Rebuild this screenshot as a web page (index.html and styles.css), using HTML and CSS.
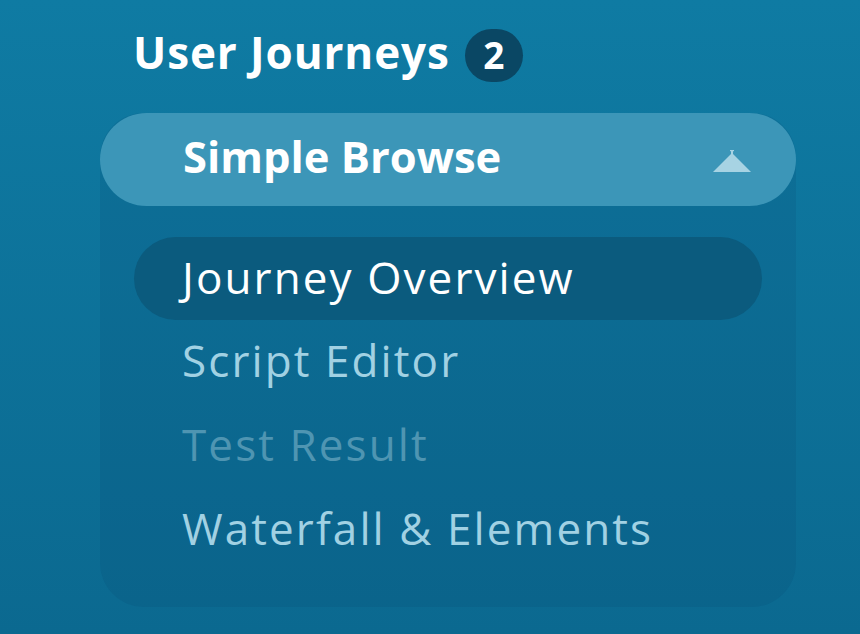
FILE: index.html
```html
<!DOCTYPE html>
<html>
<head>
<meta charset="utf-8">
<link rel="stylesheet" href="styles.css">
</head>
<body>
<div class="page">
  <h1 class="title"><span class="title-text">User Journeys</span><span class="badge">2</span></h1>
  <div class="panel">
    <div class="panel-head">
      <span class="head-text">Simple Browse</span>
      <svg class="caret" width="40" height="24" viewBox="0 0 40 24">
        <polygon points="1,23 39,23 20,4" fill="#a7d3e3"/>
        <rect x="19" y="1" width="2" height="4" fill="#a7d3e3"/>
        <rect x="18" y="1" width="4" height="1.2" fill="#a7d3e3"/>
      </svg>
    </div>
    <ul class="menu">
      <li class="item active">Journey Overview</li>
      <li class="item">Script Editor</li>
      <li class="item dim">Test Result</li>
      <li class="item">Waterfall &amp; Elements</li>
    </ul>
  </div>
</div>
</body>
</html>
```
FILE: styles.css
```css
html, body {
  margin: 0;
  height: 100%;
}
body {
  background: linear-gradient(180deg, #0f7ba3 0%, #0b6990 100%);
  font-family: "Open Sans", "Noto Sans", sans-serif;
  color: #fff;
}
.page {
  padding: 30px 64px 0 100px;
}
.title {
  margin: 0 0 31px 33px;
  font-size: 44px;
  font-weight: 700;
  line-height: 44px;
  display: flex;
  align-items: flex-start;
  gap: 15px;
}
.title-text {
  letter-spacing: 0.9px;
}
.badge {
  display: inline-flex;
  align-items: center;
  justify-content: center;
  width: 58px;
  height: 53px;
  margin-top: -1px;
  border-radius: 27px;
  background: #0a4764;
  font-size: 37px;
  line-height: 1;
  padding-bottom: 2px;
  box-sizing: border-box;
}
.panel {
  width: 696px;
  height: 494px;
  border-radius: 44px;
  background: rgba(6, 60, 95, 0.12);
}
.panel-head {
  height: 93px;
  box-sizing: border-box;
  border-radius: 47px;
  background: #3c96b8;
  display: flex;
  align-items: center;
  justify-content: space-between;
  padding: 0 44px 5px 83px;
}
.head-text {
  font-size: 43.5px;
  font-weight: 700;
  line-height: 1;
}
.caret {
  margin-top: 7px;
}
.menu {
  list-style: none;
  margin: 0;
  padding: 31px 34px 0 34px;
}
.item {
  height: 83px;
  box-sizing: border-box;
  border-radius: 42px;
  display: flex;
  align-items: center;
  padding: 0 0 4px 48px;
  font-size: 44px;
  line-height: 1;
  letter-spacing: 2.1px;
  color: #a1d1e3;
  margin-bottom: 0.7px;
}
.item.active {
  background: #0b5b7e;
  color: #fff;
}
.item.dim {
  color: #4f95b2;
}
```
